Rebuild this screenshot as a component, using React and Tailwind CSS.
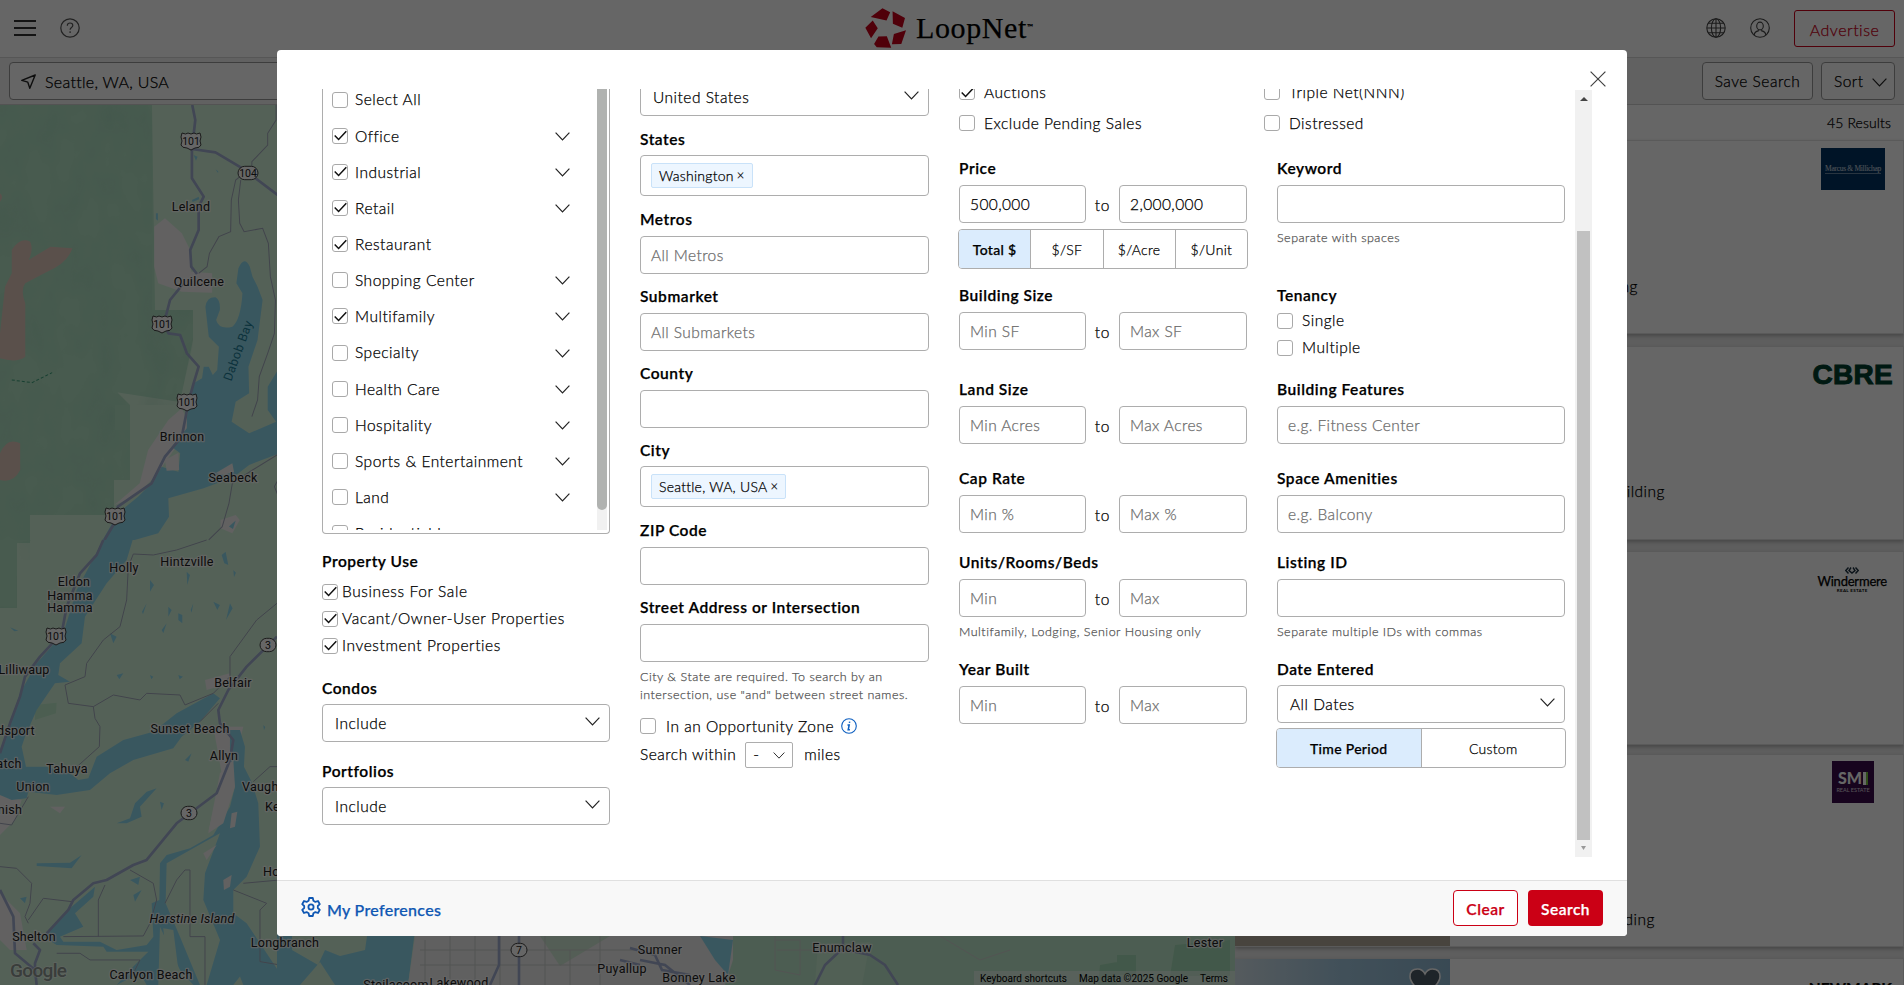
import React from "react";

const Chevron = ({ className = "" }) => (
  <svg className={"h-[9px] w-[15px] shrink-0 " + className} viewBox="0 0 15 9" fill="none" stroke="#222" strokeWidth="1.2">
    <path d="M0.6 0.7 7.5 7.9 14.4 0.7" />
  </svg>
);

const Check = ({ on, className = "" }) => (
  <span className={"flex h-4 w-4 shrink-0 items-center justify-center rounded-[3px] border border-[#a9a9a9] bg-white " + className}>
    {on && (
      <svg className="h-[11px] w-[13px]" viewBox="0 0 13 11" fill="none" stroke="#111" strokeWidth="1.5">
        <path d="M0.7 5.4 4.6 9.4 12.3 1.2" />
      </svg>
    )}
  </span>
);

const Label = ({ children, className = "mb-[5px] h-[23px]" }) => (
  <div className={"text-[15.5px] leading-[23px] font-semibold tracking-[0.55px] whitespace-nowrap text-black " + className}>{children}</div>
);

const Box = ({ children, className = "", tone = "text-[#6c6c6c]" }) => (
  <div className={"flex h-[38px] items-center rounded-[4px] border border-[#adadad] bg-white px-[10px] pt-[2px] text-[15.5px] font-light tracking-[0.4px] " + tone + " " + className}>
    {children}
  </div>
);

const Select = ({ children }) => (
  <div className="flex h-[38px] items-center justify-between rounded-[4px] border border-[#adadad] bg-white pr-[9px] pl-3 text-[15.5px] font-light tracking-[0.5px] text-black">
    <span className="pt-[2px]">{children}</span>
    <Chevron className="mb-[3px]" />
  </div>
);

const Tag = ({ children }) => (
  <div className="flex h-[41px] items-center rounded-[4px] border border-[#adadad] px-[10px]">
    <span className="flex h-[25px] items-center gap-[3px] rounded-[2px] border border-[#c9e2f9] bg-[#edf6ff] px-[7px] text-[14px] font-light tracking-[0.25px] text-black">
      {children} <span className="text-[13px] leading-none">×</span>
    </span>
  </div>
);

const Range = ({ a, b, tone }) => (
  <div className="flex">
    <Box className="w-[127px]" tone={tone}>{a}</Box>
    <span className="w-[33px] pt-[9px] text-center text-[15.5px] font-light tracking-[0.7px] text-black">to</span>
    <Box className="w-[128px]" tone={tone}>{b}</Box>
  </div>
);

const Help = ({ children }) => (
  <div className="pt-[6px] text-[12.5px] leading-[18px] font-light tracking-[0.5px] whitespace-nowrap text-[#555]">{children}</div>
);

const Segmented = ({ items, className = "" }) => (
  <div className={"-mx-px flex h-10 overflow-hidden rounded-[4px] border border-[#adadad] text-[14px] tracking-[0.3px] text-black " + className}>
    {items.map((t, i) => (
      <div
        key={t}
        className={
          "flex flex-1 items-center justify-center pt-px " +
          (i === 0 ? "bg-[#dbecfd] font-medium" : "border-l border-[#adadad] font-light")
        }
      >
        {t}
      </div>
    ))}
  </div>
);

const propertyTypes = [
  ["Select All", false, false],
  ["Office", true, true],
  ["Industrial", true, true],
  ["Retail", true, true],
  ["Restaurant", true, false],
  ["Shopping Center", false, true],
  ["Multifamily", true, true],
  ["Specialty", false, true],
  ["Health Care", false, true],
  ["Hospitality", false, true],
  ["Sports & Entertainment", false, true],
  ["Land", false, true],
  ["Residential Income", false, false],
];

const WATER = "#90daee";
const LAND = "#d3f3da";
const URBAN = "#f4f3f3";

const Shield = ({ x, y, n }) => (
  <g>
    <path
      transform={`translate(${x} ${y})`}
      d="M-9-8Q-5-6-3-8Q0-6 3-8Q5-6 9-8L10-4Q8 0 10 4Q9 7 4 7L0 9-4 7Q-9 7-10 4Q-8 0-10-4Z"
      fill="#fff"
      stroke="#444"
      strokeWidth="1"
    />
    <text x={x} y={y + 4} textAnchor="middle" fontSize="10.5" fill="#222">{n}</text>
  </g>
);

const Pill = ({ x, y, n, w = 16 }) => (
  <g>
    <rect x={x - w / 2} y={y - 6.7} width={w} height="13.4" rx="6.7" fill="#fff" stroke="#444" />
    <text x={x} y={y + 4} textAnchor="middle" fontSize="10.5" fill="#222">{n}</text>
  </g>
);

const places = [
  ["Leland", 191, 211], ["Quilcene", 199, 286], ["Brinnon", 182, 441], ["Seabeck", 233, 482],
  ["Hintzville", 187, 566], ["Holly", 124, 572], ["Eldon", 74, 586], ["Hamma", 70, 600], ["Hamma", 70, 612],
  ["Lilliwaup", 24, 674], ["Belfair", 233, 687], ["dsport", 16, 735], ["Sunset Beach", 190, 733],
  ["Allyn", 224, 760], ["atch", 9, 768], ["Tahuya", 67, 773], ["Union", 33, 791], ["nish", 10, 814],
  ["Shelton", 34, 941], ["Carlyon Beach", 151, 979], ["Longbranch", 285, 947], ["Steilacoom", 396, 989],
  ["Lakewood", 459, 987], ["Puyallup", 622, 973], ["Sumner", 660, 954], ["Bonney Lake", 699, 982],
  ["Enumclaw", 842, 952], ["Lester", 1205, 947],
];

const MapView = () => (
  <svg className="h-[880px] w-[1235px] shrink-0 font-[Roboto,sans-serif]" viewBox="0 105 1235 880">
    <defs>
      <filter id="relief" x="0" y="0" width="100%" height="100%">
        <feTurbulence type="fractalNoise" baseFrequency="0.035 0.02" numOctaves="3" seed="8" />
        <feColorMatrix values="0 0 0 0 0.3  0 0 0 0 0.6  0 0 0 0 0.45  1.6 0 0 0 -0.6" />
      </filter>
      <clipPath id="woods">
        <path d="M0 105H152V310H193V345L180 405H115V430H130V480H114V515H30V560H17V608H0Z" />
      </clipPath>
    </defs>
    <rect x="0" y="105" width="1235" height="880" fill={LAND} />
    <path d="M0 105H152L155 310H193V340L180 402 115 392V390L130 405V480H114V515H30V543H17V608H0Z" fill="#b3e3c5" />
    <g clipPath="url(#woods)"><rect x="0" y="105" width="200" height="510" filter="url(#relief)" opacity="0.32" /></g>
    {/* northern half of the visible peninsula */}
    <g transform="translate(0 100) scale(0.3367 0.3333)">
      <path d="M35 450Q60 410 90 425Q100 450 85 480L150 440 215 445Q200 490 140 515L75 550Q60 570 75 610L75 770Q50 790 0 775V700L15 560 35 520Z" fill="#e2c8bc" />
      <path d="M0 1060Q20 1010 60 1030L60 1110Q40 1150 0 1140Z" fill="#e2c8bc" />
      <path d="M0 280Q12 290 0 305Z" fill="#e2c8bc" />
      <path d="M458 380 490 355 540 400 565 450 568 515 630 520V578L540 575 470 550 458 500Z" fill={URBAN} />
      <path d="M500 960 540 925 560 970 545 1010 460 1130 400 1190 340 1215 415 1150 440 1050Z" fill={URBAN} />
      <path d="M655 1260 700 1245 712 1260 690 1300 655 1285Z" fill={URBAN} />
      <path d="M305 1320 350 1240 410 1190 450 1150 480 1100 530 1115 535 1060 510 1040 555 985 555 950 575 850 600 835 605 800 620 800 632 825 645 810 650 740 620 710 610 620Q615 590 640 592 655 600 653 630L642 660Q650 690 690 680 715 660 720 580L702 550 708 505Q725 465 742 500L750 530 765 560 780 600 765 720 738 800 740 880 700 905 688 965 740 1000 820 965 795 930 795 860 831 800V1060L740 1095 695 1130 605 1165 500 1195 502 1250 470 1300 400 1320Z" fill={WATER} />
      <path d="M640 1120 690 1090 695 1115 665 1125Z" fill={URBAN} />
      <path d="M490 1080 530 1058 532 1110 495 1112Z" fill={URBAN} />
      <path d="M575 165l12 5-5 12zM640 208l8 6 0 6zM570 300l20-10 2 8-20 8zM463 340l6 0v22l-6-5zM680 1280l20-18-8 25z" fill={WATER} />
      <g fill="none" stroke="#a4aabd" strokeWidth="3">
        <path d="M820 15V60L795 100V135L748 185V200L700 240 687 300 685 395 650 410 622 460 615 500 590 520M715 240 708 300 712 370 725 395 780 385 797 430 803 530 818 600 815 700 795 760 770 830 765 900 748 950M831 1060 750 1110 690 1150 680 1210 660 1280 620 1320M831 1130 815 1160 831 1200" />
      </g>
      <path d="M35 840 95 848 155 818" fill="none" stroke="#3c9f7b" strokeWidth="3" strokeDasharray="9 6" />
      <g fill="none" stroke="#a2aed2" strokeWidth="8" strokeLinejoin="round">
        <path d="M571 15 580 60 570 150 570 235 605 290 590 320V390L565 450 568 500 585 522M570 147 640 157 720 205 831 290M545 550 505 600 487 670 500 700 535 705 555 760 590 800 575 850 560 905 540 1010 490 1070 450 1150 350 1220 340 1270 310 1320" />
      </g>
    </g>
    {/* southern half */}
    <g transform="translate(0 540) scale(0.3333)">
      <path d="M0 0H95L50 10V200H0Z" fill="#b3e3c5" />
      <path d="M105 495 170 488 168 520 105 540Z" fill="#bdecca" />
      <path d="M0 765 65 780 45 840 0 885ZM640 560 730 560 700 680 665 800 625 875 665 700ZM615 420 690 400 690 430 620 450ZM150 800 195 800 180 820ZM0 1060 60 1120 80 1230 30 1230 0 1200Z" fill={URBAN} />
      <path d="M310 0H398L380 60 320 130 255 230 245 310 180 370 175 405 210 425 165 430 110 510 75 590 65 620 78 680 140 680 210 700 235 720 265 715 290 650 370 600 460 575 530 520 640 460 660 475 600 545 545 590 520 625 400 660 330 700 270 750 170 765 85 755 80 775 35 780 0 765V640L60 460 110 370 190 280 230 150Z" fill={WATER} />
      <path d="M690 570 720 570 735 620 732 680 755 725 775 790 780 920 740 1010 700 1050 700 1120 740 1150 840 1300V1335H620L660 1200 610 1080 615 1000 660 880 500 970 497 1090 540 1190 600 1335H580L540 1290 480 1160 475 1335H440L420 1300 350 1335 400 1280 445 1235 320 1235 310 1220 170 1215 130 1190 165 1150 215 1100 285 1040 280 1070 225 1120 250 1160 180 1190 190 1205 300 1205 350 1230 440 1215 460 1190 455 1090 478 1080 480 970 500 945 570 925 640 885 690 800 705 740 690 640Z" fill={WATER} />
      <path d="M660 700 700 660 705 740 670 850 625 880ZM695 820 712 815 705 860 690 865ZM670 1020 695 1005 690 1040 672 1050ZM610 940 650 915 620 960Z" fill={URBAN} />
      <path d="M490 1165 520 1170 535 1290 500 1270Z" fill={LAND} />
      <path d="M700 1335 720 1310 730 1335Z" fill={LAND} />
      <path d="M350 850 390 835 405 790 440 755 470 745 420 800 425 830 380 850ZM555 660 575 640 565 665ZM110 970 210 968 245 945 215 985 110 978ZM480 785 492 790 485 810ZM390 1020 420 1010 415 1035ZM400 1065 425 1050 405 1085ZM60 1075 80 1070 75 1090Z" fill={WATER} />
      <path d="M560 95l10 10-8 30zM450 120l12 15-12 20zM665 45l12-10 8 40-12-5zM640 185l20 10-8 15zM690 190l8 15-20 35zM505 200l10 10-10 20zM535 220l12 5 0 25-12-10zM330 280l20 10-10 20zM350 405l20-5-12 18zM500 250l-15 20 5 10zM580 190l-8 20 3 8zM440 190l-14 25 3 8zM700 90l8 8-6 14zM535 405l14 5-10 8zM450 405l10 5-6 8zM30 262l25 10-12 2zM790 555l6 6-4 10z" fill={WATER} />
      <g fill="none" stroke="#a4aabd" strokeWidth="3">
        <path d="M620 0 530 30 460 45 400 42 385 80 380 180 360 260 310 300 260 370 255 410 195 435 205 490 280 500 340 465 420 480 440 460 540 465 555 495 640 460 690 410V350L770 240 831 190M280 500 285 535 300 560 298 620 220 690M655 490 600 545M0 980 50 985 95 1030 90 1090 75 1130 85 1150M0 850 35 855 85 770M85 1140 130 1075 215 1085M315 1035 295 1080V1190M190 1190 430 1188 450 1150 470 1080 460 1030 390 990M495 1090 530 1020 555 990H570V1190H615V1335M730 1030 840 1020M840 680 810 680 760 725M700 1050 800 1090 780 1110V1265L840 1275M170 1240H240L270 1260H420L400 1300" />
      </g>
      <g fill="none" stroke="#a2aed2" strokeWidth="8" strokeLinejoin="round">
        <path d="M310 0 290 45 240 100 200 200 185 280 120 350 75 410 60 470 30 550 0 640M831 290 740 380 685 450 655 510 660 550 700 600 690 660 650 760 530 850 440 960 400 975 320 1020 280 1030 220 1080 205 1110 140 1180M0 1050 40 1130 45 1240 105 1290 110 1335M100 1210 120 1230 105 1270V1310" />
      </g>
    </g>
    {/* strip below the dialog */}
    <path d="M277 930H415L408 985H335L320 962 300 985H277Z" fill={WATER} />
    <path d="M292 936 367 936 365 950 340 956 325 950 318 965 292 950Z" fill={LAND} />
    <path d="M415 936H735V985H408Z" fill="#efefef" />
    <path d="M540 936 610 936 560 966Z" fill="#d2ecd6" />
    <path d="M733 936H1235V985H725L733 960Z" fill="#bfe9cc" />
    <path d="M700 936 733 940 728 975 715 960Z" fill={WATER} />
    <path d="M1117 955H1136V975H1117ZM1175 945 1230 940V976H1170ZM1100 965 1117 962V985H1098Z" fill="#a5ddb8" />
    <path d="M818 944 870 942 862 985H815Z" fill={LAND} opacity=".6" />
    <g fill="none" stroke="#cdd2d0" strokeWidth="1">
      <path d="M425 940V985M450 936V985M475 936V985M500 936V985M545 936V985M570 950V985M600 936V985M420 950H640M420 965H620M775 936V970L800 975V940H775M777 950H850M940 936 980 960 1010 950" />
    </g>
    <g fill="none" stroke="#a2aed2" strokeWidth="2.6">
      <path d="M499 936V965L490 985M519 936V985M640 960 665 965 690 985M630 948 655 955 662 970 690 975M815 985 825 965 842 949 870 955 885 965 898 985M843 936V945M620 960 640 965" />
    </g>
    <Shield x={191} y={141} n="101" /><Shield x={162} y={324} n="101" /><Shield x={187} y={402} n="101" />
    <Shield x={115} y={516} n="101" /><Shield x={56} y={636} n="101" />
    <Pill x={248} y={173} n="104" w={20} /><Pill x={268} y={645} n="3" /><Pill x={189} y={813} n="3" /><Pill x={519} y={950} n="7" />
    <g fill="#222" stroke="#ffffff" strokeOpacity="0.75" strokeWidth="2.5" paintOrder="stroke" strokeLinejoin="round" fontSize="12.5" textAnchor="middle" letterSpacing="0.25">
      {places.map(([n, x, y], i) => <text key={i} x={x} y={y}>{n}</text>)}
      <text x="192" y="923" fontStyle="italic">Harstine Island</text>
      <text x="242" y="791" textAnchor="start">Vaughn</text>
      <text x="265" y="811" textAnchor="start">Key</text>
      <text x="263" y="876" textAnchor="start">Home</text>
    </g>
    <text transform="translate(242 352) rotate(-70)" textAnchor="middle" fontSize="12.5" fill="#1f7f98" letterSpacing=".4">Dabob Bay</text>
    <text x="10" y="977" fontSize="19" fontWeight="500" fill="#8f9a93" stroke="#ffffff" strokeOpacity=".6" strokeWidth="1.5" paintOrder="stroke" textLength="57">Google</text>
    <rect x="974" y="971" width="261" height="14" fill="#fff" fillOpacity=".45" />
    <g fontSize="10" fill="#000">
      <text x="980" y="981.5" textLength="87">Keyboard shortcuts</text>
      <text x="1079" y="981.5" textLength="109">Map data ©2025 Google</text>
      <text x="1200" y="981.5" textLength="28">Terms</text>
    </g>
  </svg>
);

const Listing = ({ children, text, textClass = "", photo, className = "" }) => (
  <div className={"flex shrink-0 justify-between overflow-hidden border-y border-r border-[#e2e2e2] bg-white shadow-[0_2px_4px_rgba(0,0,0,0.25)] " + className}>
    <div className="flex">
      <div className="w-[215px]">{photo}</div>
      <div className={"self-end text-right text-[15.5px] font-light tracking-[0.5px] whitespace-nowrap text-black " + textClass}>{text}</div>
    </div>
    {children}
  </div>
);

const Page = () => (
  <div className="flex h-[985px] w-[1904px] flex-col bg-white">
    <header className="flex h-[58px] shrink-0 items-center border-b border-[#d8d8d8] px-[14px] pb-px">
      <div className="flex flex-1 items-center gap-6">
        <svg className="h-4 w-[22px]" viewBox="0 0 22 16" stroke="#333" strokeWidth="2"><path d="M0 1H22M0 8H22M0 15H22" /></svg>
        <svg className="h-5 w-5" viewBox="0 0 20 20" fill="none" stroke="#555" strokeWidth="1.2">
          <circle cx="10" cy="10" r="9.2" />
          <path d="M7.3 7.8C7.3 6 8.5 5 10 5s2.8 1 2.8 2.5c0 2-2.7 2.1-2.7 4.3M10.1 13.3v1.6" />
        </svg>
      </div>
      <div className="mr-[3px] -ml-[3px] flex items-center">
        <svg className="h-10 w-[41px]" viewBox="20 23 122 119" fill="#c8001a">
          <path d="M37 50 72 24 95 36 84 60ZM102 33 139 53 131 82 103 70ZM142 89 128 130 100 131 106 100ZM60 108 85 107 98 141 55 140 47 130ZM43 60 58 83 38 113 21 82Z" />
        </svg>
        <span className="ml-[10px] font-['Liberation_Serif',serif] text-[30px] leading-10 tracking-[0.6px] text-black">LoopNet</span>
        <span className="mb-[3px] text-[8px]">™</span>
      </div>
      <div className="flex flex-1 items-center justify-end">
        <svg className="h-5 w-5" viewBox="0 0 20 20" fill="none" stroke="#444" strokeWidth="1.1">
          <circle cx="10" cy="10" r="9.2" /><ellipse cx="10" cy="10" rx="4.6" ry="9.2" /><path d="M10 .8V19.2M1 10H19M2.4 5.2H17.6M2.4 14.8H17.6" />
        </svg>
        <svg className="ml-6 h-5 w-5" viewBox="0 0 20 20" fill="none" stroke="#444" strokeWidth="1.1">
          <circle cx="10" cy="10" r="9.3" /><ellipse cx="10" cy="8" rx="3.3" ry="3.9" /><path d="M4.2 17Q4.6 13.6 8.3 12.9V11.4M15.8 17Q15.4 13.6 11.7 12.9V11.4" />
        </svg>
        <span className="ml-6 -mr-[5px] flex h-[37px] w-[101px] items-center justify-center rounded-[3px] border border-[#cb0019] pt-[3px] text-[16px] font-light tracking-[0.5px] text-[#cb0019]">Advertise</span>
      </div>
    </header>
    <div className="flex h-[47px] shrink-0 items-center justify-between border-b border-[#d0d0d0] bg-[#f3f3f3] px-[9px]">
      <div className="flex h-[38px] w-[420px] items-center rounded-[4px] border border-[#999] bg-white pl-[11px]">
        <svg className="h-[15px] w-[15px]" viewBox="0 0 15 15" fill="none" stroke="#222" strokeWidth="1.4" strokeLinejoin="round"><path d="M14.2 1 .8 6.4 6.8 8.2 8.8 14.2Z" /></svg>
        <span className="ml-[9px] pt-px text-[16px] font-light tracking-[0.3px] text-black">Seattle, WA, USA</span>
      </div>
      <div className="flex gap-2 text-[15.5px] font-light tracking-[0.5px] text-black">
        <div className="flex h-[38px] w-[111px] items-center justify-center rounded-[4px] border border-[#999] bg-white pt-[2px]">Save Search</div>
        <div className="flex h-[38px] w-[74px] items-center justify-between rounded-[4px] border border-[#999] bg-white px-[10px] pl-3 pt-[2px]">Sort<Chevron className="-mr-[3px]" /></div>
      </div>
    </div>
    <div className="flex min-h-0 flex-1">
      <MapView />
      <div className="flex flex-1 flex-col overflow-hidden bg-[#ececec]">
        <div className="h-[35px] shrink-0 bg-white pt-[7px] pr-[13px] text-right text-[14px] font-light tracking-[0.1px] text-black">45 Results</div>
        <Listing className="h-[194px]" text="Office Building" textClass="w-[188px] pb-[35px]">
          <div className="mt-[7px] mr-[18px] flex h-[42px] w-[64px] items-center justify-center bg-[#003263] font-['Liberation_Serif',serif] text-[7.5px] tracking-[-0.3px] text-white/80 [-webkit-text-stroke:0]">
            <span className="border-b border-white/40 leading-[9px] whitespace-nowrap">Marcus &amp; Millichap</span>
          </div>
        </Listing>
        <Listing className="mt-[12px] h-[194px]" text="Office Building" textClass="w-[215px] pb-[36px]">
          <div className="mt-[14px] mr-[10px] font-['Liberation_Sans',sans-serif] text-[28px] leading-7 font-bold tracking-[0.3px] text-[#003f2d] [-webkit-text-stroke:1px_#003f2d]">CBRE</div>
        </Listing>
        <Listing className="mt-[11px] h-[194px]" text="">
          <div className="mt-[15px] mr-[16px] flex h-7 flex-col items-center text-black">
            <svg className="h-[7px] w-[14px]" viewBox="0 0 14 7" fill="none" stroke="#1c3140" strokeWidth="1.4"><path d="M3.5.5.8 3.5 3.5 6.5M6 .5 4 3.5 7 6 10 3.5 8 .5M10.5.5 13.2 3.5 10.5 6.5" /></svg>
            <span className="text-[13px] leading-[14px] tracking-[-0.2px]">Windermere</span>
            <span className="text-[4.5px] leading-[6px] font-bold tracking-[0.3px] [-webkit-text-stroke:0]">REAL ESTATE</span>
          </div>
        </Listing>
        <Listing className="mt-[9px] h-[193px]" text="Office Building" textClass="w-[205px] pb-[15px]" photo={<div className="h-full bg-[#b5aa9b]" />}>
          <div className="mt-[6px] mr-[29px] flex h-[42px] w-[42px] flex-col items-center justify-center bg-[#3a0a4c] [-webkit-text-stroke:0]">
            <span className="flex items-center text-[16px] leading-4 font-black text-white">SM<span className="ml-px h-[13px] w-[3px] bg-white" /><span className="h-[13px] w-[2px] bg-[#7ac143]" /></span>
            <span className="text-[5.5px] leading-[8px] whitespace-nowrap text-white/80">REAL ESTATE</span>
          </div>
        </Listing>
        <Listing
          className="mt-[11px] h-[194px]"
          text=""
          photo={
            <div className="flex h-full justify-end bg-linear-to-r from-[#d4e2ea] via-[#a3c8df] to-[#8fb7d2] pt-[8px] pr-[9px]">
              <svg className="h-[30px] w-[32px]" viewBox="0 0 32 30" fill="#4d5a66" stroke="#fff" strokeWidth="1.6"><path d="M16 28Q1 17 1 9.5 1 2 8.5 2 13.5 2 16 7 18.5 2 23.5 2 31 2 31 9.5 31 17 16 28Z" /></svg>
            </div>
          }
        >
          <div className="mt-[15px] mr-[11px] text-[15.5px] leading-7 font-bold text-black">NEWMARK</div>
        </Listing>
      </div>
    </div>
  </div>
);

const ModalCheck = ({ children, on, gap = "gap-[9px]", className = "" }) => (
  <div className={"flex items-center text-[15.5px] font-light tracking-[0.5px] whitespace-nowrap text-black " + gap + " " + className}>
    <Check on={on} />
    <span className="pt-px">{children}</span>
  </div>
);

const SearchDialog = () => (
  <div className="flex h-[886px] w-[1350px] flex-col overflow-hidden rounded-[4px] bg-white">
    <div className="flex h-[39px] shrink-0 items-end justify-end pr-[21px]">
      <svg className="mb-[2px] h-4 w-4" viewBox="0 0 16 16" stroke="#444" strokeWidth="1.2"><path d="M.6.6 15.4 15.4M15.4.6.6 15.4" /></svg>
    </div>
    <div className="flex h-[768px] shrink-0 overflow-hidden pl-[45px]">
      {/* property type */}
      <div className="w-[288px]">
        <div className="h-[445px] rounded-b-[4px] border-x border-b border-[#adadad] pr-[2px] pb-[2px]">
          <div className="flex h-[441px] overflow-hidden">
            <div className="-mt-[7.5px] flex-1 pl-[9px]">
              {propertyTypes.map(([name, on, arrow]) => (
                <div key={name} className="flex h-[36.15px] items-center justify-between pr-[27px]">
                  <ModalCheck on={on} gap="gap-[7px]">{name}</ModalCheck>
                  {arrow && <Chevron className="mt-px" />}
                </div>
              ))}
            </div>
            <div className="w-[10px] bg-[#f1f1f1]"><div className="h-[421px] rounded-b-full bg-[#b0b2b0]" /></div>
          </div>
        </div>
        <div className="mt-[16px] mb-px"><Label>Property Use</Label></div>
        {["Business For Sale", "Vacant/Owner-User Properties", "Investment Properties"].map((t) => (
          <ModalCheck key={t} on gap="gap-1" className="h-[27px] tracking-[0.6px]">{t}</ModalCheck>
        ))}
        <div className="mt-[17px]"><Label className="mb-1 h-6 pt-px">Condos</Label><Select>Include</Select></div>
        <div className="mt-[17px]"><Label className="mb-1 h-6 pt-px">Portfolios</Label><Select>Include</Select></div>
      </div>
      {/* location */}
      <div className="ml-[30px] w-[289px]">
        <div className="-mt-[11px]"><Select>United States</Select></div>
        <div className="mt-[11px]"><Label className="mb-1 h-6 pt-px">States</Label><Tag>Washington</Tag></div>
        <div className="mt-[12px]"><Label>Metros</Label><Box>All Metros</Box></div>
        <div className="mt-[11px]"><Label>Submarket</Label><Box>All Submarkets</Box></div>
        <div className="mt-[11px]"><Label>County</Label><Box /></div>
        <div className="mt-[10px]"><Label className="mb-1 h-6 pt-px">City</Label><Tag>Seattle, WA, USA</Tag></div>
        <div className="mt-[12px]"><Label>ZIP Code</Label><Box /></div>
        <div className="mt-[11px]"><Label>Street Address or Intersection</Label><Box /></div>
        <Help>City &amp; State are required. To search by an<br />intersection, use "and" between street names.</Help>
        <div className="mt-[10px] flex h-6 items-center">
          <ModalCheck gap="gap-[10px]">In an Opportunity Zone</ModalCheck>
          <svg className="ml-[7px] h-4 w-4" viewBox="0 0 16 16" fill="none" stroke="#0d5fc0" strokeWidth="1.1">
            <circle cx="8" cy="8" r="7.3" /><path d="M8.7 3.6 8.4 4.9M6.5 7H8.2L7.2 11.8H8.9" strokeWidth="1.5" />
          </svg>
        </div>
        <div className="mt-1 flex h-[26px] items-center text-[15.5px] font-light tracking-[0.5px] text-black">
          Search within
          <span className="mr-[11px] ml-[9px] flex h-[26px] w-12 items-center justify-between rounded-[2px] border border-[#adadad] px-[7px]">-<Chevron className="!h-[7px] !w-3" /></span>
          miles
        </div>
      </div>
      {/* listing criteria */}
      <div className="ml-[30px] w-[606px]">
        <div className="-mt-[9px] grid grid-cols-[305px_1fr] gap-y-[7px]">
          <ModalCheck on className="h-6">Auctions</ModalCheck>
          <ModalCheck className="h-6">Triple Net(NNN)</ModalCheck>
          <ModalCheck className="h-6">Exclude Pending Sales</ModalCheck>
          <ModalCheck className="h-6">Distressed</ModalCheck>
        </div>
        <div className="mt-[22px] grid grid-cols-[288px_288px] grid-rows-[127px_94px_89px_84px_107px_120px] gap-x-[30px]">
          <div><Label>Price</Label><Range a="500,000" b="2,000,000" tone="text-black" /><Segmented className="mt-[6px]" items={["Total $", "$/SF", "$/Acre", "$/Unit"]} /></div>
          <div><Label>Keyword</Label><Box /><Help>Separate with spaces</Help></div>
          <div><Label>Building Size</Label><Range a="Min SF" b="Max SF" /></div>
          <div>
            <div className="-mb-[5px]"><Label>Tenancy</Label></div>
            <ModalCheck className="h-[27px]">Single</ModalCheck>
            <ModalCheck className="h-[27px]">Multiple</ModalCheck>
          </div>
          <div><Label>Land Size</Label><Range a="Min Acres" b="Max Acres" /></div>
          <div><Label>Building Features</Label><Box>e.g. Fitness Center</Box></div>
          <div><Label>Cap Rate</Label><Range a="Min %" b="Max %" /></div>
          <div><Label>Space Amenities</Label><Box>e.g. Balcony</Box></div>
          <div><Label>Units/Rooms/Beds</Label><Range a="Min" b="Max" /><Help>Multifamily, Lodging, Senior Housing only</Help></div>
          <div><Label>Listing ID</Label><Box /><Help>Separate multiple IDs with commas</Help></div>
          <div><Label>Year Built</Label><Range a="Min" b="Max" /></div>
          <div><Label className="mb-1 h-[23px]">Date Entered</Label><Select>All Dates</Select><Segmented className="mt-[5px]" items={["Time Period", "Custom"]} /></div>
        </div>
      </div>
      <div className="mt-px ml-[10px] flex w-[17px] flex-col items-center justify-between bg-[#f1f1f1]">
        <svg className="mt-[7px] h-1 w-2" viewBox="0 0 8 4" fill="#444"><path d="M4 0 8 4H0Z" /></svg>
        <div className="mt-[130px] w-[13px] flex-1 bg-[#c1c1c1]" />
        <svg className="mt-[6px] mb-[7px] h-1 w-[5px]" viewBox="0 0 5 4" fill="#999"><path d="M0 0H5L2.5 4Z" /></svg>
      </div>
    </div>
    <div className="flex-1" />
    <div className="flex h-[56px] shrink-0 items-center border-t border-[#e0e0e0] bg-[#f8f8f8] pr-6 pl-6 text-[16px]">
      <svg className="mb-1 h-5 w-5" viewBox="0 0 20 20" fill="none" stroke="#0f57b3" strokeWidth="1.8" strokeLinejoin="round">
        <path d="M8.2 1H11.8L12.4 3.7 14.4 4.9 17 4 18.8 7.2 16.8 9V11L18.8 12.8 17 16 14.4 15.1 12.4 16.3 11.8 19H8.2L7.6 16.3 5.6 15.1 3 16 1.2 12.8 3.2 11V9L1.2 7.2 3 4 5.6 4.9 7.6 3.7Z" />
        <circle cx="10" cy="10" r="2.6" />
      </svg>
      <span className="ml-[6px] flex-1 pt-[2px] font-medium tracking-[0.3px] text-[#0f57b3]">My Preferences</span>
      <div className="mb-px flex h-9 w-[65px] items-center justify-center rounded-[4px] border border-[#cb0015] bg-white pt-[3px] text-[15.5px] font-semibold tracking-[0.5px] text-[#cb0015]">Clear</div>
      <div className="mb-px ml-[10px] flex h-9 w-[75px] items-center justify-center rounded-[4px] bg-[#cb0015] pt-[3px] text-[15.5px] font-semibold tracking-[0.5px] text-white">Search</div>
    </div>
  </div>
);

export default function App() {
  return (
    <div className="relative h-[985px] w-[1904px] overflow-hidden font-[Lato,sans-serif] [-webkit-text-stroke:0.25px]">
      <Page />
      <div className="absolute inset-0 flex justify-center bg-black/60 pt-[50px]">
        <SearchDialog />
      </div>
    </div>
  );
}
